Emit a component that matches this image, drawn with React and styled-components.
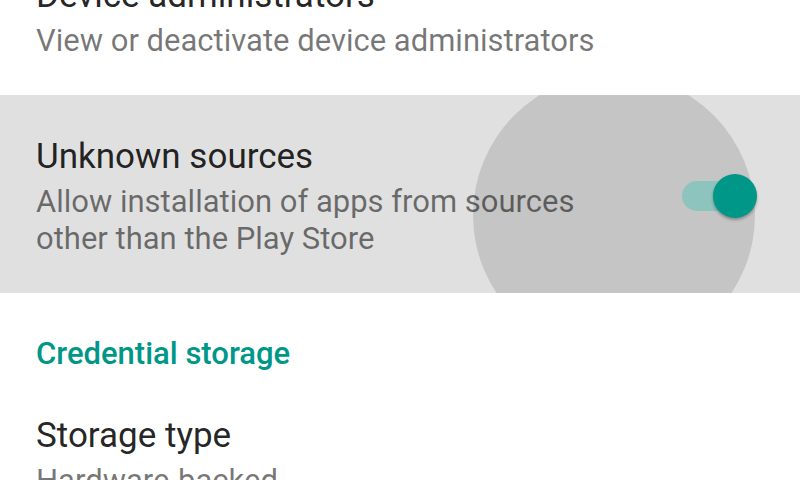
import styled, { createGlobalStyle } from 'styled-components';

const GlobalStyle = createGlobalStyle`
  html, body {
    margin: 0;
    padding: 0;
    background: #ffffff;
    overflow: hidden;
  }
  body {
    font-family: Roboto, "Noto Sans", "Liberation Sans", sans-serif;
    -webkit-font-smoothing: antialiased;
  }
`

function Toggle({ checked }) {
    return (
        <ToggleWrapper>
            <Track checked={checked} />
            <Thumb checked={checked} />
        </ToggleWrapper>
    )
}

function PrefRow({ title, summary, pressed, toggle }) {
    return (
        <Row pressed={pressed}>
            {pressed && <Ripple />}
            <TextColumn>
                <Title>{title}</Title>
                {summary && <Summary>{summary}</Summary>}
            </TextColumn>
            {toggle !== undefined && <Toggle checked={toggle} />}
        </Row>
    )
}

function App() {
    return (
        <>
            <GlobalStyle />
            <Screen>
                <PrefRow
                    title="Device administrators"
                    summary="View or deactivate device administrators"
                />
                <PrefRow
                    title="Unknown sources"
                    summary="Allow installation of apps from sources other than the Play Store"
                    pressed
                    toggle={true}
                />
                <CategoryHeader>Credential storage</CategoryHeader>
                <PrefRow title="Storage type" summary="Hardware-backed" />
            </Screen>
        </>
    )
}

const Screen = styled.div`
  width: 800px;
  height: 480px;
  overflow: hidden;
  display: flex;
  flex-direction: column;
  background: #ffffff;
  & > :first-child {
    margin-top: -66px;
  }
`

const Row = styled.div`
  position: relative;
  overflow: hidden;
  flex-shrink: 0;
  display: flex;
  align-items: center;
  padding: 42px 43px 36px 36px;
  background: ${props => props.pressed ? '#e0e0e0' : 'transparent'};
`

const Ripple = styled.div`
  position: absolute;
  left: 473px;
  top: -21px;
  width: 282px;
  height: 282px;
  border-radius: 50%;
  background: #c5c5c5;
`

const TextColumn = styled.div`
  position: relative;
  flex: 1;
  min-width: 0;
  margin-right: 40px;
`

const Title = styled.div`
  font-size: 35px;
  line-height: 40px;
  color: rgba(0, 0, 0, 0.87);
`

const Summary = styled.div`
  margin-top: 6px;
  font-size: 31px;
  line-height: 37px;
  color: rgba(0, 0, 0, 0.54);
`

const CategoryHeader = styled.div`
  flex-shrink: 0;
  padding: 42px 36px 2px;
  font-size: 31px;
  line-height: 37px;
  font-weight: 500;
  color: #009688;
`

const ToggleWrapper = styled.div`
  position: relative;
  width: 75px;
  height: 44px;
  margin-top: -2px;
  flex-shrink: 0;
`

const Track = styled.div`
  position: absolute;
  left: 0;
  top: 7px;
  width: 72px;
  height: 30px;
  border-radius: 15px;
  background: ${props => props.checked ? '#8dc4bd' : '#b0b0b0'};
`

const Thumb = styled.div`
  position: absolute;
  top: 0;
  left: ${props => props.checked ? '31px' : '0'};
  width: 44px;
  height: 44px;
  border-radius: 50%;
  background: ${props => props.checked ? '#009688' : '#f1f1f1'};
  box-shadow: 0 2px 3px rgba(0, 0, 0, 0.3);
`

export default App
